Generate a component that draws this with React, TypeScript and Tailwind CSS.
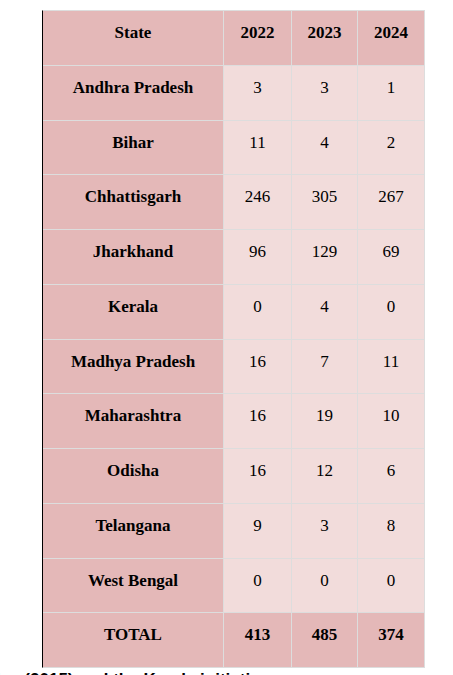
const rows: [string, number, number, number][] = [
  ["Andhra Pradesh", 3, 3, 1],
  ["Bihar", 11, 4, 2],
  ["Chhattisgarh", 246, 305, 267],
  ["Jharkhand", 96, 129, 69],
  ["Kerala", 0, 4, 0],
  ["Madhya Pradesh", 16, 7, 11],
  ["Maharashtra", 16, 19, 10],
  ["Odisha", 16, 12, 6],
  ["Telangana", 9, 3, 8],
  ["West Bengal", 0, 0, 0],
];

const head = "flex items-center justify-center pb-[10px] bg-[#e4b8b8] font-bold";
const cell = "flex items-center justify-center pb-[10px] bg-[#f2dcdb]";

export default function App() {
  return (
    <div className="h-[675px] w-[453px] overflow-hidden bg-white text-[17px] text-black [font-family:'Liberation_Serif',serif]">
      <div className="ml-[42px] mt-[10px] h-[658px] w-[383px] border-l border-l-black border-t border-r border-b border-t-[#dddddd] border-r-[#dddddd] border-b-[#dddddd] bg-[#dddddd]">
        <div className="grid h-full grid-cols-[180px_67px_65px_66px] grid-rows-[repeat(12,minmax(0,1fr))] gap-px">
          <div className={head}>State</div>
          <div className={head}>2022</div>
          <div className={head}>2023</div>
          <div className={head}>2024</div>
          {rows.map(([state, a, b, c]) => (
            <div key={state} className="contents">
              <div className={head}>{state}</div>
              <div className={cell}>{a}</div>
              <div className={cell}>{b}</div>
              <div className={cell}>{c}</div>
            </div>
          ))}
          <div className={head}>TOTAL</div>
          <div className={head}>413</div>
          <div className={head}>485</div>
          <div className={head}>374</div>
        </div>
      </div>
      <p className="-ml-[4px] mt-[2px] whitespace-nowrap text-[17px] font-bold leading-[20px] [font-family:'Liberation_Sans',sans-serif]">lee (2015) and the Kerala initiatives</p>
    </div>
  );
}
